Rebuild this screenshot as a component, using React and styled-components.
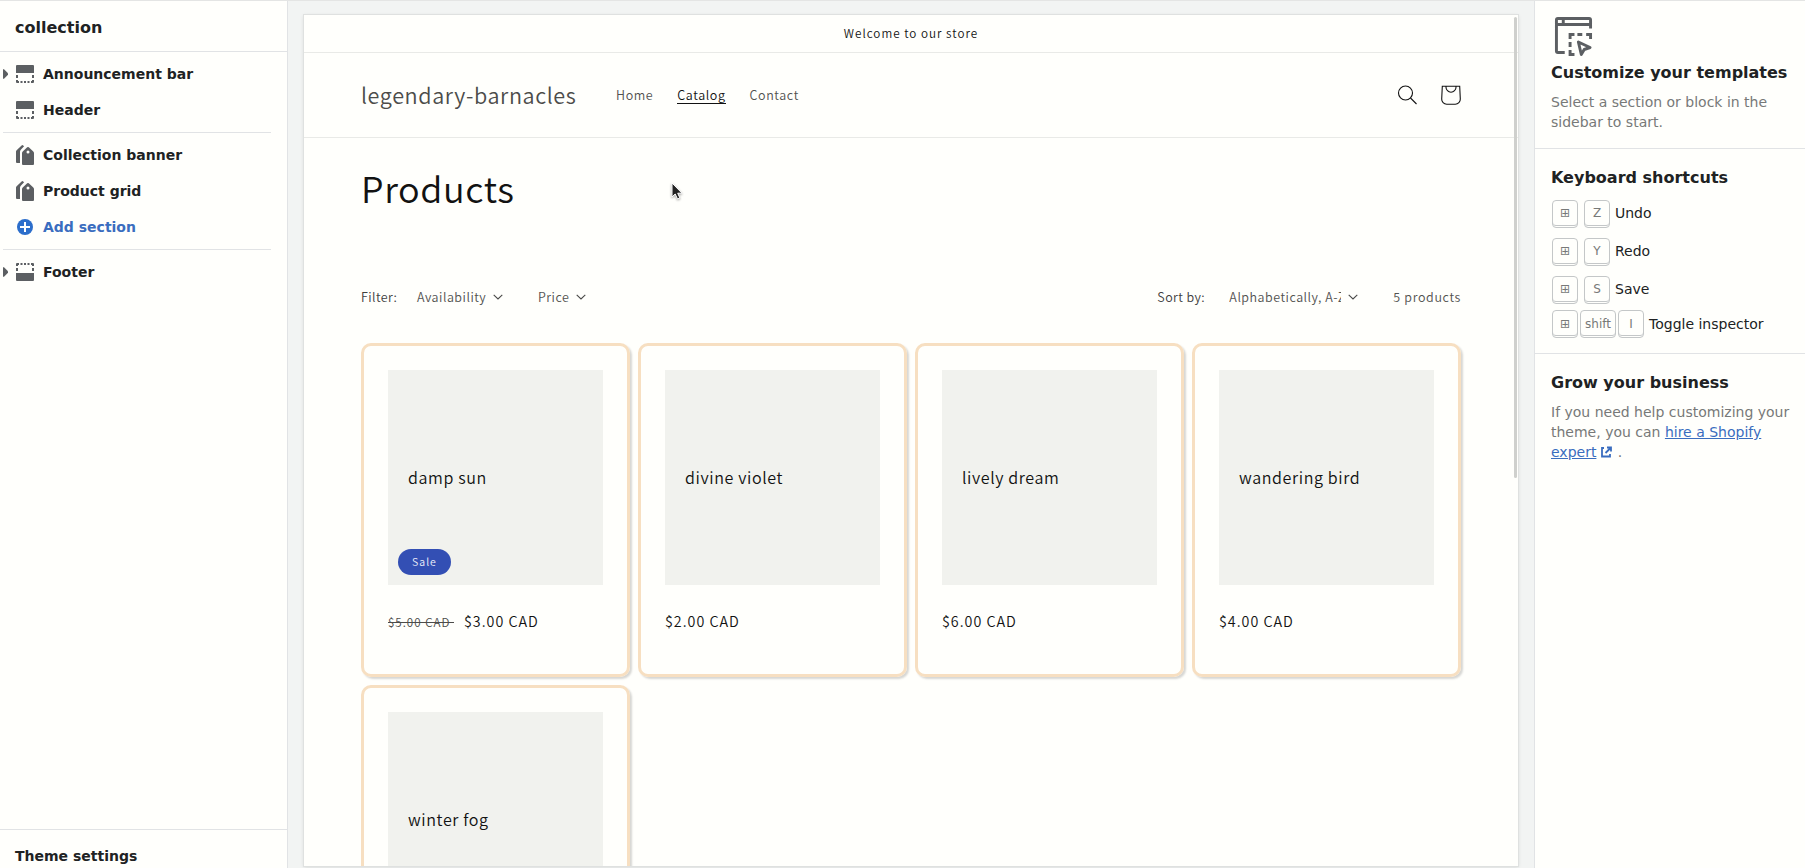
import React from "react";
import styled, { createGlobalStyle } from "styled-components";

const GlobalStyle = createGlobalStyle`
  * { box-sizing: border-box; }
  html, body { margin: 0; height: 100%; overflow: hidden; }
  body { font-family: "DejaVu Sans", sans-serif; background: #f2f4f3; color: #202223; }
  h1, h2, p, ul { margin: 0; padding: 0; }
`;

const page = "#fffffc";
const line = "#e1e3e5";

const Editor = styled.div`
  display: flex;
  width: 100vw;
  height: 100vh;
  border-top: 1px solid #e4e5e4;
  overflow: hidden;
`;

/* ---------- left sidebar ---------- */

const Sidebar = styled.aside`
  display: flex;
  flex-direction: column;
  flex: none;
  width: 288px;
  background: ${page};
  border-right: 1px solid ${line};
`;

const SidebarTitle = styled.h2`
  flex: none;
  height: 51px;
  padding: 1px 15px 0;
  border-bottom: 1px solid ${line};
  font-size: 16px;
  line-height: 52px;
`;

const SectionList = styled.div`
  flex: 1;
  padding: 4px 16px 0 3px;
`;

const SectionRow = styled.div`
  display: flex;
  align-items: center;
  height: 36px;
  font-size: 14px;
  font-weight: 700;
  color: ${(p) => (p.$link ? "#3a6dbf" : "#202223")};
  svg { flex: none; }
`;

const CaretSlot = styled.span`
  display: flex;
  width: 12px;
`;

const IconSlot = styled.span`
  display: flex;
  width: 20px;
  margin-right: 8px;
`;

const SectionDivider = styled.div`
  height: 1px;
  margin: 4px 0;
  background: ${line};
`;

const SidebarFooter = styled.div`
  flex: none;
  height: 39px;
  padding: 16px 15px 0;
  border-top: 1px solid ${line};
  font-size: 14px;
  font-weight: 700;
  line-height: 20px;
`;

/* ---------- store preview ---------- */

const Stage = styled.main`
  flex: 1;
  min-width: 0;
  padding: 14px 16px 2px;
`;

const Preview = styled.div`
  position: relative;
  height: 100%;
  background: ${page};
  box-shadow: 0 0 0 1px #dfe1e0, 0 1px 4px rgba(0, 0, 0, 0.14);
  overflow: hidden;
  font-family: "Noto Sans CJK JP", "Noto Sans", sans-serif;
  font-weight: 350;
`;

const ScrollThumb = styled.div`
  position: absolute;
  top: 2px;
  right: 1px;
  width: 3px;
  height: 461px;
  border-radius: 2px;
  background: #cfd0cd;
`;

const Announcement = styled.div`
  height: 38px;
  border-bottom: 1px solid #e9eae7;
  text-align: center;
  font-size: 11.7px;
  letter-spacing: 1px;
  line-height: 36px;
  color: #121212;
`;

const StoreHeader = styled.header`
  display: flex;
  align-items: center;
  height: 85px;
  padding: 0 57px;
  border-bottom: 1px solid #e9eae7;
`;

const Logo = styled.div`
  width: 255px;
  font-size: 21.6px;
  letter-spacing: 0.6px;
  line-height: 32px;
  white-space: nowrap;
  color: #4c4c4a;
`;

const Nav = styled.nav`
  display: flex;
  gap: 24px;
  flex: 1;
  font-size: 12.5px;
  letter-spacing: 0.6px;
  line-height: 18px;
`;

const NavItem = styled.span`
  color: ${(p) => (p.$active ? "#121212" : "#525250")};
  box-shadow: ${(p) => (p.$active ? "0 -1px 0 #121212 inset" : "none")};
`;

const HeaderIcons = styled.div`
  display: flex;
  gap: 24px;
`;

const PageTitle = styled.h1`
  height: 104px;
  padding: 0 57px;
  font-size: 36px;
  font-weight: 350;
  letter-spacing: 0.6px;
  line-height: 98px;
  color: #121212;
`;

const Facets = styled.div`
  display: flex;
  align-items: center;
  height: 38px;
  margin: 35px 57px 28px;
  font-size: 12.5px;
  letter-spacing: 0.5px;
  color: #525250;
  white-space: nowrap;
`;

const FacetLabel = styled.span`
  width: ${(p) => p.$w}px;
  letter-spacing: 0.4px;
  color: #40403e;
`;

const Facet = styled.span`
  display: flex;
  align-items: center;
  gap: 7px;
  width: ${(p) => p.$w}px;
  svg { flex: none; margin-top: 2px; }
`;

const SortValue = styled.span`
  width: 112px;
  overflow: hidden;
`;

const ProductCount = styled.span`
  letter-spacing: 0.65px;
`;

const Spacer = styled.span`
  flex: 1;
`;

const Grid = styled.div`
  display: grid;
  grid-template-columns: repeat(4, 269px);
  gap: 8px;
  padding: 0 57px;
`;

const Card = styled.article`
  height: 334px;
  padding: 24px;
  border: 3px solid #f7dfc1;
  border-radius: 10px;
  box-shadow: 2px 2px 2px rgba(18, 18, 18, 0.17);
`;

const Media = styled.div`
  position: relative;
  display: flex;
  align-items: center;
  height: 215px;
  padding: 0 20px 2px;
  background: #f1f2ee;
  font-size: 16.1px;
  letter-spacing: 0.6px;
  color: #121212;
`;

const Badge = styled.span`
  position: absolute;
  left: 10px;
  bottom: 10px;
  width: 53px;
  height: 26px;
  border-radius: 13px;
  background: #334fb4;
  color: #eef0fa;
  font-size: 10.5px;
  letter-spacing: 1px;
  line-height: 25px;
  text-align: center;
`;

const PriceRow = styled.div`
  display: flex;
  align-items: baseline;
  margin-top: 24px;
  font-size: 14.3px;
  letter-spacing: 1px;
  line-height: 24px;
  color: #121212;
  white-space: pre;
`;

const OldPrice = styled.span`
  width: 76px;
  font-size: 11.6px;
  color: #4c4c4a;
`;

/* ---------- right panel ---------- */

const Panel = styled.aside`
  flex: none;
  width: 271px;
  background: ${page};
  border-left: 1px solid ${line};
`;

const PanelBlock = styled.section`
  height: ${(p) => p.$h}px;
  padding: ${(p) => p.$top}px 0 0 16px;
  border-bottom: ${(p) => (p.$last ? "none" : `1px solid ${line}`)};
`;

const PanelIcon = styled.div`
  height: 49px;
  padding: 2px 0 0 3px;
`;

const PanelTitle = styled.h2`
  font-size: 16px;
  line-height: 20px;
  white-space: nowrap;
`;

const PanelText = styled.p`
  margin-top: 9px;
  font-size: 14px;
  line-height: 20px;
  color: #777978;
`;

const PanelLink = styled.a`
  color: #3a6dbf;
  text-decoration: underline;
`;

const InlineIcon = styled.svg`
  margin: 0 1px 0 4px;
  vertical-align: -1px;
`;

const Shortcut = styled.div`
  display: flex;
  align-items: center;
  gap: ${(p) => (p.$tight ? 2 : 6)}px;
  height: 28px;
  margin-top: ${(p) => (p.$tight ? 6 : 10)}px;
  padding-left: 1px;
  font-size: 14px;
  h2 + & { margin-top: 12px; }
`;

const Key = styled.kbd`
  width: ${(p) => (p.$wide ? 36 : 26)}px;
  height: 28px;
  border: 1px solid #c4c7c8;
  border-radius: 4px;
  box-shadow: inset 0 -1px 0 ${page}, inset 0 -2px 0 #c4c7c8;
  font-family: "DejaVu Sans", sans-serif;
  font-size: 12px;
  line-height: ${(p) => (p.$tight ? 26 : 25)}px;
  text-align: center;
  color: #777978;
`;

const ShortcutName = styled.span`
  margin-left: ${(p) => (p.$tight ? 3 : -1)}px;
  padding-bottom: ${(p) => (p.$tight ? 0 : 2)}px;
`;

/* ---------- icons ---------- */

const Caret = () => (
  <svg width="5" height="10" viewBox="0 0 5 10"><path d="M0 .2h1L5 4.200v1.600L1 9.800H0Z" fill="#5c5f62" /></svg>
);

const SectionIcon = ({ flip }) => (
  <svg width="20" height="20" viewBox="0 0 20 20" fill="#5c5f62" transform={flip ? "scale(1 -1)" : undefined}>
    <path d="M1 2a1 1 0 0 1 1-1h16a1 1 0 0 1 1 1v7H1zM1 11h2v3H1zM17 11h2v3h-2zM1 16h2v1h1v2H2a1 1 0 0 1-1-1zM17 16h2v2a1 1 0 0 1-1 1h-2v-2h1zM5.500 17h2v2h-2zM9 17h2v2H9zM12.500 17h2v2h-2z" />
  </svg>
);

const TagsIcon = () => (
  <svg width="20" height="20" viewBox="0 0 20 20" fill="#5c5f62">
    <path d="M6.600.4a1.200 1.200 0 0 1 1.600 0l.9.9-3.300 3.500A3 3 0 0 0 5 6.900V18H2a1 1 0 0 1-1-1V6.600a2 2 0 0 1 .6-1.400z" />
    <path fillRule="evenodd" d="M12.200 2.300a1.200 1.200 0 0 1 1.600 0l4.500 4.300A2 2 0 0 1 19 8v11a1 1 0 0 1-1 1H8a1 1 0 0 1-1-1V8a2 2 0 0 1 .7-1.400zM13 5.500a1.500 1.500 0 1 0 0 3 1.500 1.500 0 0 0 0-3z" />
  </svg>
);

const AddIcon = () => (
  <svg width="20" height="20" viewBox="0 0 20 20">
    <circle cx="10" cy="10" r="8" fill="#2c6ecb" />
    <path d="M10 5v10M5 10h10" stroke="#fff" strokeWidth="2" />
  </svg>
);

const Chevron = () => (
  <svg width="10" height="6" viewBox="0 0 10 6"><path d="M.7.8 5 5 9.300.8" fill="none" stroke="#4a4a48" strokeWidth="1.100" /></svg>
);

const SearchIcon = () => (
  <svg width="20" height="20" viewBox="0 0 20 20" fill="none" stroke="#121212" strokeWidth="1.100">
    <circle cx="8.500" cy="8" r="7" /><path d="m13.500 13 6 6" />
  </svg>
);

const BagIcon = () => (
  <svg width="20" height="20" viewBox="0 0 20 20" fill="none" stroke="#121212" strokeWidth="1.100">
    <path d="M1.300 1.200h17.400L19.300 14a5 5 0 0 1-5 5.200H5.700a5 5 0 0 1-5-5.200zM5 1.200v1a5 5 0 0 0 10 0v-1" />
  </svg>
);

const TemplateIcon = () => (
  <svg width="39" height="42" viewBox="0 0 40 42" preserveAspectRatio="none" fill="none" stroke="#5c5f62" strokeWidth="3">
    <path d="M11 36.500H4a1.500 1.500 0 0 1-1.500-1.500V4A1.500 1.500 0 0 1 4 2.500H36A1.500 1.500 0 0 1 37.500 4v8.500M2.500 8.500h35M9.500 2.500v6" />
    <path d="M16.500 23v-4.500H21M24 18.500h5M33 18.500h4.500V23M16.500 26v5M16.500 34v4.500H21" />
    <path d="M25 26 37 31.500 31 33.500 28 38.500z" strokeLinejoin="round" strokeWidth="3" />
  </svg>
);

const ExternalIcon = () => (
  <InlineIcon width="12" height="12" viewBox="0 0 12 12" fill="none" stroke="#3a6dbf" strokeWidth="1.800">
    <path d="M4 2H2v8.500h8V8M7 1.500h4v4M10.500 2 5.500 7" />
  </InlineIcon>
);

const Pointer = styled.svg`
  position: absolute;
  left: 367px;
  top: 167px;
  filter: drop-shadow(0 1px 1px rgba(0, 0, 0, 0.35));
`;

/* ---------- content ---------- */

const products = [
  { name: "damp sun", price: "$3.00 CAD", was: "$5.00 CAD" },
  { name: "divine violet", price: "$2.00 CAD" },
  { name: "lively dream", price: "$6.00 CAD" },
  { name: "wandering bird", price: "$4.00 CAD" },
  { name: "winter fog" },
];

const shortcuts = [
  { keys: ["⊞", "Z"], name: "Undo" },
  { keys: ["⊞", "Y"], name: "Redo" },
  { keys: ["⊞", "S"], name: "Save" },
  { keys: ["⊞", "shift", "I"], name: "Toggle inspector" },
];

const Section = ({ icon, caret, link, children }) => (
  <SectionRow $link={link}>
    <CaretSlot>{caret && <Caret />}</CaretSlot>
    <IconSlot>{icon}</IconSlot>
    {children}
  </SectionRow>
);

export default function App() {
  return (
    <Editor>
      <GlobalStyle />
      <Sidebar>
        <SidebarTitle>collection</SidebarTitle>
        <SectionList>
          <Section icon={<SectionIcon />} caret>Announcement bar</Section>
          <Section icon={<SectionIcon />}>Header</Section>
          <SectionDivider />
          <Section icon={<TagsIcon />}>Collection banner</Section>
          <Section icon={<TagsIcon />}>Product grid</Section>
          <Section icon={<AddIcon />} link>Add section</Section>
          <SectionDivider />
          <Section icon={<SectionIcon flip />} caret>Footer</Section>
        </SectionList>
        <SidebarFooter>Theme settings</SidebarFooter>
      </Sidebar>

      <Stage>
        <Preview>
          <Announcement>Welcome to our store</Announcement>
          <StoreHeader>
            <Logo>legendary-barnacles</Logo>
            <Nav>
              <NavItem>Home</NavItem>
              <NavItem $active>Catalog</NavItem>
              <NavItem>Contact</NavItem>
            </Nav>
            <HeaderIcons><SearchIcon /><BagIcon /></HeaderIcons>
          </StoreHeader>
          <PageTitle>Products</PageTitle>
          <Facets>
            <FacetLabel $w={56}>Filter:</FacetLabel>
            <Facet $w={121}>Availability<Chevron /></Facet>
            <Facet $w={60}>Price<Chevron /></Facet>
            <Spacer />
            <FacetLabel $w={72}>Sort by:</FacetLabel>
            <Facet $w={164}><SortValue>Alphabetically, A-Z</SortValue><Chevron /></Facet>
            <ProductCount>5 products</ProductCount>
          </Facets>
          <Grid>
            {products.map((p) => (
              <Card key={p.name}>
                <Media>{p.name}{p.was && <Badge>Sale</Badge>}</Media>
                {p.price && (
                  <PriceRow>
                    {p.was && <OldPrice><s>{p.was + " "}</s></OldPrice>}
                    <span>{p.price}</span>
                  </PriceRow>
                )}
              </Card>
            ))}
          </Grid>
          <ScrollThumb />
          <Pointer width="14" height="20" viewBox="0 0 14 20">
            <path d="M1 1v14l3.200-3 2.300 5 2.400-1-2.200-4.800H11z" fill="#222" stroke="#fff" strokeWidth="1" />
          </Pointer>
        </Preview>
      </Stage>

      <Panel>
        <PanelBlock $h={148} $top={13}>
          <PanelIcon><TemplateIcon /></PanelIcon>
          <PanelTitle>Customize your templates</PanelTitle>
          <PanelText>Select a section or block in the sidebar to start.</PanelText>
        </PanelBlock>
        <PanelBlock $h={205} $top={19}>
          <PanelTitle>Keyboard shortcuts</PanelTitle>
          {shortcuts.map((s) => {
            const tight = s.keys.length > 2;
            return (
              <Shortcut key={s.name} $tight={tight}>
                {s.keys.map((k) => <Key key={k} $wide={k.length > 1} $tight={tight}>{k}</Key>)}
                <ShortcutName $tight={tight}>{s.name}</ShortcutName>
              </Shortcut>
            );
          })}
        </PanelBlock>
        <PanelBlock $h={200} $top={19} $last>
          <PanelTitle>Grow your business</PanelTitle>
          <PanelText>
            If you need help customizing your theme, you can <PanelLink>hire a Shopify expert</PanelLink>
            <ExternalIcon /> .
          </PanelText>
        </PanelBlock>
      </Panel>
    </Editor>
  );
}
